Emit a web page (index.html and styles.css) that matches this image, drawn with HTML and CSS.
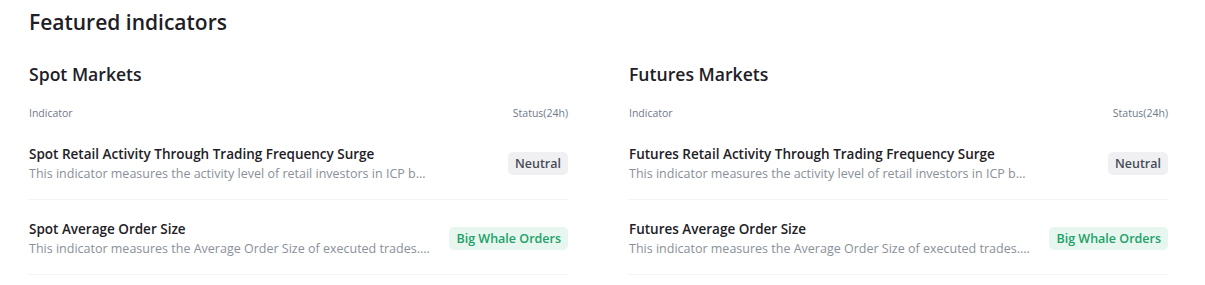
FILE: index.html
```html
<!DOCTYPE html>
<html lang="en">
<head>
<meta charset="utf-8">
<link rel="stylesheet" href="styles.css">
</head>
<body>
<div class="page">
  <h1 class="title">Featured indicators</h1>
  <div class="columns">
    <section class="market">
      <h2 class="market-title">Spot Markets</h2>
      <div class="table-head"><span>Indicator</span><span>Status(24h)</span></div>
      <div class="row">
        <div class="info">
          <div class="name">Spot Retail Activity Through Trading Frequency Surge</div>
          <div class="desc">This indicator measures the activity level of retail investors in ICP b...</div>
        </div>
        <span class="badge neutral">Neutral</span>
      </div>
      <div class="row">
        <div class="info">
          <div class="name">Spot Average Order Size</div>
          <div class="desc">This indicator measures the Average Order Size of executed trades....</div>
        </div>
        <span class="badge whale">Big Whale Orders</span>
      </div>
    </section>
    <section class="market">
      <h2 class="market-title">Futures Markets</h2>
      <div class="table-head"><span>Indicator</span><span>Status(24h)</span></div>
      <div class="row">
        <div class="info">
          <div class="name">Futures Retail Activity Through Trading Frequency Surge</div>
          <div class="desc">This indicator measures the activity level of retail investors in ICP b...</div>
        </div>
        <span class="badge neutral">Neutral</span>
      </div>
      <div class="row">
        <div class="info">
          <div class="name">Futures Average Order Size</div>
          <div class="desc">This indicator measures the Average Order Size of executed trades....</div>
        </div>
        <span class="badge whale">Big Whale Orders</span>
      </div>
    </section>
  </div>
</div>
</body>
</html>
```

FILE: styles.css
```css
* { box-sizing: border-box; }
html, body { margin: 0; background: #fff; }
body {
  font-family: "Open Sans", "Noto Sans", sans-serif;
  color: #1e2026;
}
.page {
  padding: 7px 37px 0 29px;
}
.title {
  margin: 0;
  font-size: 21px;
  line-height: 30px;
  font-weight: 600;
  color: #1e2026;
}
.columns {
  display: grid;
  grid-template-columns: 1fr 1fr;
  column-gap: 61px;
  margin-top: 24px;
}
.market-title {
  margin: 0;
  font-size: 17.6px;
  line-height: 26px;
  font-weight: 600;
}
.table-head {
  display: flex;
  justify-content: space-between;
  margin-top: 18px;
  margin-bottom: 4px;
  font-size: 10.5px;
  line-height: 16px;
  color: #707a8a;
}
.row {
  display: flex;
  align-items: center;
  justify-content: space-between;
  padding: 19px 0 16px;
  border-bottom: 1px solid #f2f3f5;
}
.info { min-width: 0; }
.name {
  font-size: 13.5px;
  line-height: 20px;
  font-weight: 600;
  color: #1e2026;
  white-space: nowrap;
}
.desc {
  font-size: 12.5px;
  line-height: 19px;
  color: #8a8f99;
  white-space: nowrap;
}
.badge {
  flex: none;
  height: 23px;
  line-height: 23px;
  padding: 0 7px;
  border-radius: 5px;
  font-size: 12.5px;
  font-weight: 600;
}
.neutral { background: #f0f0f3; color: #474d57; }
.whale { background: #e7f6ef; color: #20a168; }
```
